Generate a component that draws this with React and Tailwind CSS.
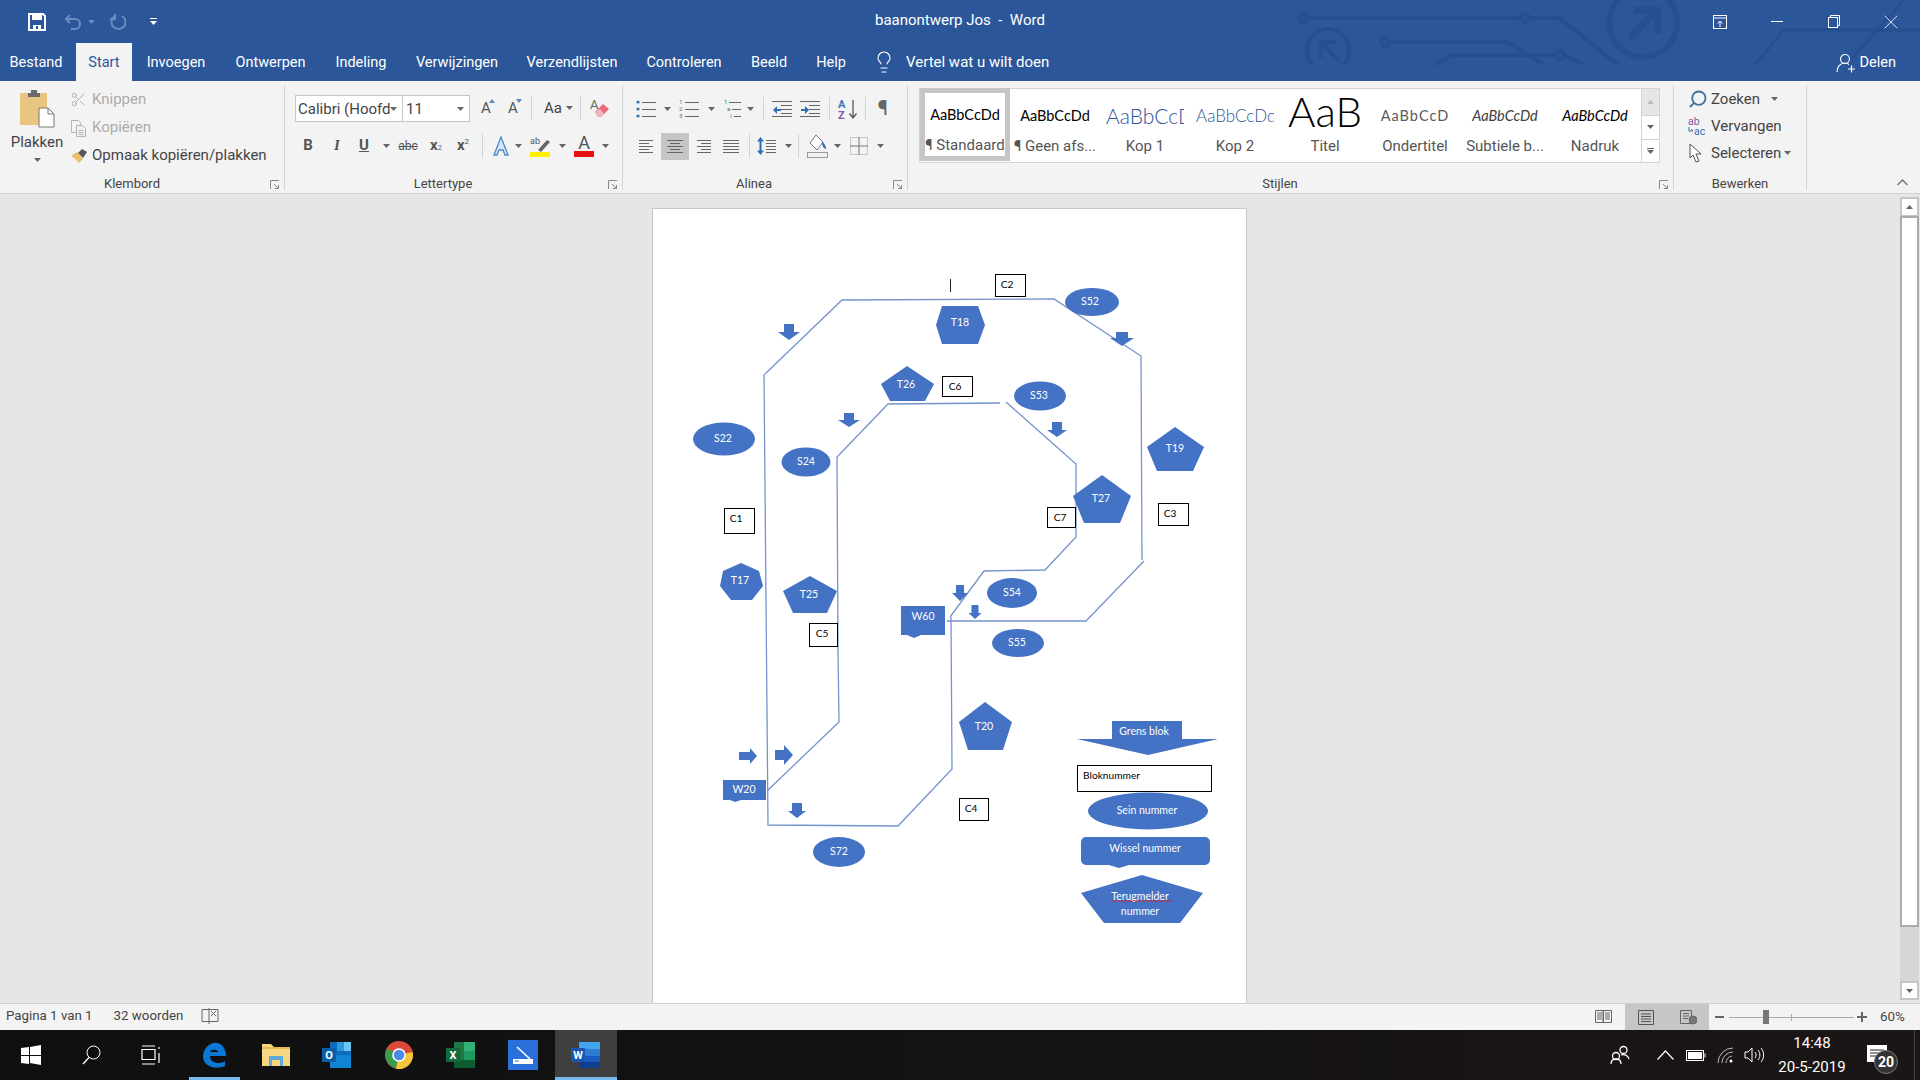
import React from 'react'
import { Scissors, Search, Lightbulb, X } from 'lucide-react'

const BLUE = '#4472c4'
const LINE = '#7593cc'

// ---------- small ribbon helpers ----------
function Caret({ color = '#666' }) {
  return <svg width="7" height="4" viewBox="0 0 7 4"><path d="M0 0h7L3.5 4z" fill={color} /></svg>
}

function Slot({ c = '', children }) {
  return <span className={`flex items-center justify-center shrink-0 h-full ${c}`}>{children}</span>
}

function Sep() {
  return <span className="block w-px h-[24px] bg-[#d4d4d4]" />
}

function Launcher() {
  return (
    <svg className="absolute right-[4px] bottom-0" width="10" height="10" viewBox="0 0 10 10" fill="none" stroke="#8a8a8a">
      <path d="M.5 9V.5H9" />
      <path d="M4 4l4.5 4.5M5 8.5h3.5V5" />
    </svg>
  )
}

function Group({ label, w, pr = '', launcher, children }) {
  return (
    <div className={`relative flex flex-col h-[105px] shrink-0 border-r border-[#d4d4d4] ${w}`}>
      <div className="h-[93px]">{children}</div>
      <div className={`h-[12px] leading-[12px] text-center text-[13px] text-[#444] ${pr}`}>{label}</div>
      {launcher && <Launcher />}
    </div>
  )
}

function Lines({ x = 0, y = 0, w = 14, n = 4, gap = 3, widths, color = '#666' }) {
  return (
    <>
      {Array.from({ length: n }).map((_, i) => (
        <rect key={i} x={x + (widths ? widths[i][0] : 0)} y={y + i * gap} width={widths ? widths[i][1] : w} height="1" fill={color} />
      ))}
    </>
  )
}

// ---------- ribbon icons ----------
const PasteIcon = () => (
  <svg width="36" height="40" viewBox="0 0 36 40">
    <rect x="1" y="4" width="27" height="32" rx="1" fill="#e8c581" />
    <path d="M9 4h3V1h6v3h3v4H9z" fill="#6b6b6b" />
    <path d="M20 19h9l6 6v13H20z" fill="#fff" stroke="#777" />
    <path d="M29 19v6h6" fill="none" stroke="#777" />
  </svg>
)

const CopyIcon = () => (
  <svg width="18" height="18" viewBox="0 0 18 18" fill="#f3f3f3" stroke="#b4b4b4">
    <path d="M1.5 1.5h7l2 2v10h-9z" />
    <path d="M6.5 6.5h6l3 3v8h-9z" />
    <path d="M8.5 11.5h5M8.5 13.5h5M8.5 15.5h5" />
  </svg>
)

const BrushIcon = () => (
  <svg width="18" height="16" viewBox="0 0 18 16">
    <path d="M1 8l6-4 6 7-4 4C7 12 4 10 1 8z" fill="#e9c16f" />
    <path d="M8 5l4-4 5 3-4 6z" fill="#555" />
  </svg>
)

const EraserIcon = () => (
  <svg width="20" height="22" viewBox="0 0 20 22">
    <text x="0" y="12" fontSize="13" fill="#666" fontFamily="Roboto, sans-serif">A</text>
    <path d="M5 15l8-8 6 5-8 8H8z" fill="#ec6a80" />
    <path d="M5 15l3 5h3l3-3-4-5z" fill="#f3b6c1" />
  </svg>
)

const BulletsIcon = () => (
  <svg width="20" height="20" viewBox="0 0 20 20">
    <circle cx="2" cy="3" r="1.6" fill="#41719c" /><circle cx="2" cy="10" r="1.6" fill="#41719c" /><circle cx="2" cy="17" r="1.6" fill="#41719c" />
    <Lines x={6} y={3} w={14} n={3} gap={7} />
  </svg>
)

const NumberIcon = () => (
  <svg width="20" height="20" viewBox="0 0 20 20" fontFamily="Roboto, sans-serif" fontSize="6" fill="#41719c">
    <text x="0" y="5">1</text><text x="0" y="12">2</text><text x="0" y="19">3</text>
    <Lines x={6} y={3} w={14} n={3} gap={7} />
  </svg>
)

const MultiIcon = () => (
  <svg width="18" height="20" viewBox="0 0 18 20" fontFamily="Roboto, sans-serif" fontSize="6" fill="#41719c">
    <text x="0" y="5">1</text><text x="3" y="12">a</text><text x="6" y="19">i</text>
    <rect x="5" y="3" width="12" height="1" fill="#666" /><rect x="8" y="10" width="9" height="1" fill="#666" /><rect x="10" y="17" width="7" height="1" fill="#666" />
  </svg>
)

const IndentIcon = ({ flip }) => (
  <svg width="20" height="18" viewBox="0 0 20 18">
    <Lines x={0} y={1} w={20} n={1} />
    <Lines x={9} y={5} w={11} n={3} gap={4} />
    <Lines x={0} y={16} w={20} n={1} />
    {flip
      ? <path d="M1 9h4V6l4 4-4 4v-3H1z" fill="#2b70b5" />
      : <path d="M9 9H5V6l-4 4 4 4v-3h4z" fill="#2b70b5" />}
  </svg>
)

const SortIcon = () => (
  <svg width="20" height="22" viewBox="0 0 20 22" fontFamily="Roboto, sans-serif" fontSize="11" fontWeight="700">
    <text x="0" y="10" fill="#3f78b5">A</text>
    <text x="0" y="21" fill="#7f5ba6">Z</text>
    <path d="M15 2v17M11.5 15.5L15 20l3.5-4.5" stroke="#555" fill="none" strokeWidth="1.3" />
  </svg>
)

const AlignIcon = ({ rows }) => (
  <svg width="16" height="15" viewBox="0 0 16 15">
    <Lines y={1} n={5} gap={3} widths={rows} />
  </svg>
)

const SpacingIcon = () => (
  <svg width="20" height="20" viewBox="0 0 20 20">
    <path d="M3.500 1l3.500 4.500H4.500v9H7L3.500 19 0 14.500h2.500v-9H0z" fill="#2b70b5" />
    <Lines x={9} y={4} w={10} n={5} gap={3} />
  </svg>
)

const FillIcon = () => (
  <svg width="22" height="24" viewBox="0 0 22 24">
    <path d="M3 9l6-8 7 7-6 8z" fill="#fff" stroke="#777" />
    <path d="M15 8c3 1 4 5 4 7-2 0-4-3-4-7z" fill="#2b70b5" />
    <rect x=".5" y="18.5" width="20" height="5" fill="#f3f3f3" stroke="#999" />
  </svg>
)

const BordersIcon = () => (
  <svg width="18" height="18" viewBox="0 0 18 18" fill="none" stroke="#9a9a9a" strokeDasharray="1 1">
    <rect x=".5" y=".5" width="17" height="17" />
    <path d="M9 0v18M0 9h18" stroke="#777" strokeDasharray="none" />
  </svg>
)

const GrowFont = ({ down }) => (
  <span className="relative text-[15px] text-[#555]">
    A
    <svg className="absolute -right-[4px] top-[2px]" width="6" height="4" viewBox="0 0 6 4">
      <path d={down ? 'M0 0h6L3 4z' : 'M0 4h6L3 0z'} fill="#5b87bd" />
    </svg>
  </span>
)

// ---------- taskbar logos ----------
const EdgeLogo = () => (
  <svg width="26" height="28" viewBox="0 0 26 28">
    <path d="M2 15C3 6 10 1 16 2c6 1 9 7 9 13H9c0 7 9 9 15 5v5c-9 4-22 1-22-10z" fill="#0a78d4" />
    <path d="M9 11c1-3 7-3 8 0z" fill="#0e0f10" />
  </svg>
)

const FolderLogo = () => (
  <svg width="28" height="24" viewBox="0 0 28 24">
    <path d="M0 1h9l3 3h16v19H0z" fill="#f6d67e" />
    <path d="M0 4h28v2H0z" fill="#e6b94f" />
    <path d="M7 13h14v10h-3v-6H10v6H7z" fill="#5fa8d8" />
  </svg>
)

const OutlookLogo = () => (
  <svg width="30" height="28" viewBox="0 0 30 28">
    <rect x="8" y="1" width="21" height="26" fill="#0f6cbd" />
    <rect x="15" y="1" width="7" height="9" fill="#2a9be0" />
    <rect x="22" y="1" width="7" height="9" fill="#6cc4f0" />
    <path d="M8 14l21 0v13H8z" fill="#1284d4" />
    <rect x="0" y="7" width="14" height="14" fill="#0a5ea8" />
    <text x="7" y="18" fontSize="11" fontWeight="700" textAnchor="middle" fill="#fff" fontFamily="Roboto, sans-serif">O</text>
  </svg>
)

const ChromeLogo = () => (
  <svg width="28" height="28" viewBox="0 0 28 28">
    <circle cx="14" cy="14" r="14" fill="#da4a3c" />
    <path d="M14 14L2 7.5A14 14 0 0 0 11 27.7z" fill="#3a9b4a" />
    <path d="M14 14l13.6-3A14 14 0 0 1 11 27.7z" fill="#f5c83b" />
    <circle cx="14" cy="14" r="6.8" fill="#fff" />
    <circle cx="14" cy="14" r="5.3" fill="#4a8be8" />
  </svg>
)

const ExcelLogo = () => (
  <svg width="30" height="28" viewBox="0 0 30 28">
    <rect x="8" y="1" width="21" height="26" fill="#1d7a45" />
    <rect x="18" y="1" width="11" height="9" fill="#33b077" />
    <rect x="18" y="10" width="11" height="9" fill="#1f9960" />
    <rect x="8" y="19" width="21" height="8" fill="#0e5c32" />
    <rect x="0" y="7" width="14" height="14" fill="#12693a" />
    <text x="7" y="18" fontSize="11" fontWeight="700" textAnchor="middle" fill="#fff" fontFamily="Roboto, sans-serif">X</text>
  </svg>
)

const ScanLogo = () => (
  <svg width="30" height="30" viewBox="0 0 30 30">
    <rect width="30" height="30" fill="#2a6fdb" />
    <path d="M9 7l13 12" stroke="#fff" strokeWidth="1.6" />
    <path d="M5 19h20v5H5z" fill="#fff" />
    <path d="M7 21h4" stroke="#2a6fdb" />
  </svg>
)

const WordLogo = () => (
  <svg width="30" height="28" viewBox="0 0 30 28">
    <rect x="8" y="1" width="21" height="7" fill="#41a5ee" />
    <rect x="8" y="8" width="21" height="7" fill="#2b7cd3" />
    <rect x="8" y="15" width="21" height="6" fill="#185abd" />
    <rect x="8" y="21" width="21" height="6" fill="#103f91" />
    <rect x="0" y="7" width="14" height="14" fill="#1a56b0" />
    <text x="7" y="18" fontSize="11" fontWeight="700" textAnchor="middle" fill="#fff" fontFamily="Roboto, sans-serif">W</text>
  </svg>
)

// ---------- diagram data, in screen coordinates ----------
const tracks = [
  '765,374 842,300 1054,299 1141,356 1142,560',
  '1144,561 1086,621 947,621',
  '764,374 768,825 898,826 952,769 951,617',
  '950,617 984,571 1045,570 1076,537 1076,464 1006,402',
  '1000,403 888,404 837,457 838,650 839,722 767,791',
]

const polys = [
  ['T18', '942,306 978,306 985,325 978,344 942,344 936,325', 960, 323],
  ['T26', '907,366 934,384 925,401 890,401 881,384', 906, 385],
  ['T19', '1175,427 1204,447 1193,471 1157,471 1147,447', 1175, 449],
  ['T27', '1102,475 1131,496 1120,523 1084,523 1073,496', 1101, 499],
  ['T17', '741,563 759,571 763,586 752,600 731,600 720,586 723,571', 740, 581],
  ['T25', '810,576 837,591 827,613 793,613 783,591', 809, 595],
  ['T20', '985,702 1012,722 1003,750 968,750 959,722', 984, 727],
  ['W60', '901,606 945,606 945,635 921,635 914,638 907,635 901,635', 923, 617],
  ['W20', '723,780 766,780 766,800 741,800 735,802 730,800 723,800', 744, 790],
  ['Grens blok', '1112,721 1182,721 1182,739 1218,739 1148,755 1077,739 1112,739', 1144, 732],
]

const ellipses = [
  ['S52', 1092, 302, 27, 14, 1090],
  ['S53', 1040, 396, 26, 14.5, 1039],
  ['S22', 724, 439, 31, 16.5, 723],
  ['S24', 806, 462, 24.5, 14.5, 806],
  ['S54', 1012, 593, 25, 15, 1012],
  ['S55', 1018, 643, 26, 14, 1017],
  ['S72', 839, 852, 26, 15, 839],
  ['Sein nummer', 1148, 811, 60, 18.5, 1147],
]

const boxes = [
  ['C2', 995, 274, 30, 22, 1007],
  ['C6', 942, 376, 30, 20, 955],
  ['C7', 1047, 507, 28, 20, 1060],
  ['C3', 1158, 503, 30, 22, 1170],
  ['C1', 724, 508, 30, 25, 736],
  ['C5', 809, 623, 28, 23, 822],
  ['C4', 959, 798, 29, 22, 971],
]

// cx, top, bottom, head half width, shaft half width, y where the head starts
const downArrows = [
  [789, 324, 340, 11, 5, 332],
  [1122, 332, 346, 12, 6, 338],
  [849, 413, 427, 11, 5, 420],
  [1057, 422, 437, 10, 5, 430],
  [960, 585, 601, 8, 4, 593],
  [975, 605, 619, 6.5, 3.5, 613],
  [797, 803, 818, 9, 5, 811],
]

// cy, left, right, head half height, shaft half height, x where the head starts
const rightArrows = [
  [756, 739, 757, 8, 4, 750],
  [755, 775, 793, 10, 5, 784],
]

const squiggle = Array.from({ length: 31 }).map((_, i) => `${1112 + i * 2},${i % 2 ? 900 : 902}`).join(' ')

function Diagram() {
  const label = "text-[10.5px] fill-white font-['Lato',sans-serif]"
  const dark = "text-[10.2px] fill-black font-['Lato',sans-serif]"
  return (
    <svg width="593" height="794" viewBox="653 209 593 794" className="block">
      {tracks.map(p => <polyline key={p} points={p} fill="none" stroke={LINE} strokeWidth="1.3" />)}
      {polys.map(([t, p, x, y]) => (
        <g key={t}>
          <polygon points={p} fill={BLUE} />
          <text x={x} y={y - 1} textAnchor="middle" dominantBaseline="central" className={label}>{t}</text>
        </g>
      ))}
      {ellipses.map(([t, cx, cy, rx, ry, tx]) => (
        <g key={t}>
          <ellipse cx={cx} cy={cy} rx={rx} ry={ry} fill={BLUE} />
          <text x={tx} y={cy - 1} textAnchor="middle" dominantBaseline="central" className={label}>{t}</text>
        </g>
      ))}
      {boxes.map(([t, x, y, w, h, tx]) => (
        <g key={t}>
          <rect x={x + .5} y={y + .5} width={w} height={h} fill="#fff" stroke="#000" />
          <text x={tx} y={y + 10} textAnchor="middle" dominantBaseline="central" className={dark}>{t}</text>
        </g>
      ))}
      {downArrows.map(([c, t, b, hw, sw, hy]) => (
        <polygon key={`${c}${t}`} fill={BLUE}
          points={`${c - sw},${t} ${c + sw},${t} ${c + sw},${hy} ${c + hw},${hy} ${c},${b} ${c - hw},${hy} ${c - sw},${hy}`} />
      ))}
      {rightArrows.map(([c, l, r, hh, sh, hx]) => (
        <polygon key={`${c}${l}`} fill={BLUE}
          points={`${l},${c - sh} ${hx},${c - sh} ${hx},${c - hh} ${r},${c} ${hx},${c + hh} ${hx},${c + sh} ${l},${c + sh}`} />
      ))}
      <rect x="1077.5" y="765.5" width="134" height="26" fill="#fff" stroke="#000" />
      <text x="1083" y="775" dominantBaseline="central" className={dark}>Bloknummer</text>
      <path d="M1086 837h119a5 5 0 0 1 5 5v18a5 5 0 0 1-5 5h-76l-10 3-10-3h-23a5 5 0 0 1-5-5v-18a5 5 0 0 1 5-5z" fill={BLUE} />
      <text x="1145" y="848" textAnchor="middle" dominantBaseline="central" className={label}>Wissel nummer</text>
      <polygon points="1142,875 1203,893 1180,923 1104,923 1081,893" fill={BLUE} />
      <text x="1140" y="896" textAnchor="middle" dominantBaseline="central" className={label}>Terugmelder</text>
      <text x="1140" y="911" textAnchor="middle" dominantBaseline="central" className={label}>nummer</text>
      <polyline points={squiggle} fill="none" stroke="#c0303c" strokeWidth="1" />
      <rect x="950" y="279" width="1" height="13" fill="#222" />
    </svg>
  )
}

// ---------- big areas ----------
function CircuitArt() {
  return (
    <svg className="absolute left-[1295px] top-0" width="625" height="65" viewBox="1295 0 625 65" fill="none" stroke="#25508f" strokeWidth="4">
      <circle cx="1303" cy="18" r="4" />
      <path d="M1307 18h214M1529 18h31l58 47" />
      <circle cx="1525" cy="18" r="4" />
      <circle cx="1385" cy="42" r="4" />
      <path d="M1389 42h119l36 23M1434 65l18-10h104M1564 55l21 10" />
      <circle cx="1560" cy="55" r="4" />
      <circle cx="1328" cy="50" r="21" />
      <path d="M1340 62l-17-18M1321 58V42h16" />
      <circle cx="1643" cy="23" r="34" strokeWidth="6" />
      <path d="M1630 38l27-29M1634 10h24v24" strokeWidth="7" />
      <path d="M1755 65l29-35h136M1846 65l58-65" strokeWidth="3" />
    </svg>
  )
}

function TitleBar() {
  return (
    <div className="relative bg-[#2b579a] text-white shrink-0">
      <CircuitArt />
      <div className="relative flex items-center h-[43px]">
        <Slot c="w-[62px] justify-end pr-[16px]">
          <svg width="18" height="18" viewBox="0 0 18 18">
            <path d="M1 1h14l2 2v14H1z" fill="none" stroke="#fff" strokeWidth="2" />
            <path d="M4 1h10v6H4z" fill="#fff" />
            <path d="M5 12h8v5H5z" fill="#fff" />
            <path d="M8 13h2v3H8z" fill="#2b579a" />
          </svg>
        </Slot>
        <Slot c="w-[22px]">
          <svg width="18" height="16" viewBox="0 0 18 16" fill="none" stroke="#6c8cbf" strokeWidth="2">
            <path d="M6 1L2 5l4 4M2 5h9a5 5 0 0 1 0 10H7" />
          </svg>
        </Slot>
        <Slot c="w-[14px]"><Caret color="#6c8cbf" /></Slot>
        <Slot c="w-[40px]">
          <svg width="16" height="18" viewBox="0 0 16 18" fill="none" stroke="#6c8cbf" strokeWidth="2">
            <path d="M11 3a7 7 0 1 1-7 0M4 1v5H-1" transform="translate(1 0)" />
          </svg>
        </Slot>
        <Slot c="w-[30px]">
          <svg width="7" height="8" viewBox="0 0 7 8" fill="#fff"><path d="M0 0h7v1H0zM0 3h7L3.500 7z" /></svg>
        </Slot>
        <div className="w-[707px] shrink-0" />
        <span className="text-[15px] whitespace-pre -mt-[2px]">baanontwerp Jos  -  Word</span>
        <div className="ml-auto flex items-center h-full">
          <Slot c="w-[30px]">
            <svg width="14" height="14" viewBox="0 0 14 14" fill="none" stroke="#fff">
              <rect x=".5" y=".5" width="13" height="13" />
              <path d="M0 3h14M7 12V6M4.5 8.5L7 6l2.5 2.5" />
            </svg>
          </Slot>
          <Slot c="w-[84px]"><span className="block w-[12px] h-px bg-white" /></Slot>
          <Slot c="w-[30px]">
            <svg width="12" height="13" viewBox="0 0 12 13" fill="none" stroke="#fff">
              <rect x=".5" y="2.5" width="9" height="10" />
              <path d="M2.5 2.5v-2h9v10h-2" />
            </svg>
          </Slot>
          <div className="w-[13px]" />
          <Slot c="w-[58px]"><X size={24} strokeWidth={0.8} /></Slot>
        </div>
      </div>
      <div className="relative flex items-stretch h-[38px] text-[14.5px]">
        <Slot c="w-[72px] pt-px">Bestand</Slot>
        <Slot c="w-[56px] ml-[4px] pt-px bg-[#f3f3f3] text-[#2b579a]">Start</Slot>
        <Slot c="w-[88px] pt-px">Invoegen</Slot>
        <Slot c="w-[101px] pt-px">Ontwerpen</Slot>
        <Slot c="w-[80px] pt-px">Indeling</Slot>
        <Slot c="w-[112px] pt-px">Verwijzingen</Slot>
        <Slot c="w-[118px] pt-px">Verzendlijsten</Slot>
        <Slot c="w-[106px] pt-px">Controleren</Slot>
        <Slot c="w-[64px] pt-px">Beeld</Slot>
        <Slot c="w-[60px] pt-px">Help</Slot>
        <Slot c="w-[45px]"><Lightbulb size={24} strokeWidth={1.1} /></Slot>
        <Slot c="pt-px text-[15px]">Vertel wat u wilt doen</Slot>
        <div className="ml-auto flex items-center pr-[24px] pt-[2px]">
          <svg width="20" height="20" viewBox="0 0 20 20" fill="none" stroke="#fff" strokeWidth="1.200" className="mr-[4px]">
            <circle cx="9" cy="6" r="4.500" />
            <path d="M1 19c0-5 3-9 8-9 2 0 3 .5 4 1.500M12 16h7M15.500 12.500v7" />
          </svg>
          Delen
        </div>
      </div>
    </div>
  )
}

function StyleItem({ preview, label, selected, pc = '' }) {
  return (
    <div className={`flex flex-col items-center w-[90px] shrink-0 h-full overflow-hidden ${selected ? 'border-[5px] border-[#c6c6c6] -mt-[1px] pt-[3px]' : 'pt-[8px]'}`}>
      <div className={`h-[38px] w-[78px] flex items-center justify-center overflow-hidden whitespace-nowrap font-['Lato',sans-serif] ${pc}`}>{preview}</div>
      <div className="text-[15px] text-[#555] leading-[22px] whitespace-nowrap">{label}</div>
    </div>
  )
}

function Ribbon() {
  return (
    <div className="flex h-[113px] shrink-0 items-center bg-[#f3f3f3] border-b border-[#d2d2d2] text-[#444] text-[15px]">
      <Group label="Klembord" w="w-[285px]" pr="pr-[20px]" launcher>
        <div className="flex h-full">
          <div className="flex flex-col items-center w-[70px] pl-[4px] pt-[4px]">
            <PasteIcon />
            <span className="mt-[3px] leading-[20px]">Plakken</span>
            <span className="mt-[6px] flex"><Caret /></span>
          </div>
          <div className="flex flex-col pt-[1px]">
            <div className="flex items-center h-[28px] text-[#acacac]"><Scissors size={17} className="mr-[5px]" strokeWidth={1.2} color="#a8a8a8" />Knippen</div>
            <div className="flex items-center h-[28px] text-[#acacac]"><span className="mr-[4px] flex"><CopyIcon /></span>Kopiëren</div>
            <div className="flex items-center h-[28px] whitespace-nowrap"><span className="mr-[4px] flex"><BrushIcon /></span>Opmaak kopiëren/plakken</div>
          </div>
        </div>
      </Group>

      <Group label="Lettertype" w="w-[338px]" pr="pr-[21px]" launcher>
        <div className="pl-[10px] pt-[10px]">
          <div className="flex items-center h-[27px]">
            <div className="flex items-center justify-between w-[108px] h-full bg-white border border-[#c6c6c6] pl-[2px] pr-[5px] pt-[2px]">
              <span className="w-[92px] overflow-hidden whitespace-nowrap">Calibri (Hoofdtekst)</span><Caret />
            </div>
            <div className="flex items-center justify-between w-[67px] h-full bg-white border border-l-0 border-[#c6c6c6] pl-[3px] pr-[5px] pt-[2px]">
              <span>11</span><Caret />
            </div>
            <Slot c="w-[32px]"><GrowFont /></Slot>
            <Slot c="w-[22px]"><GrowFont down /></Slot>
            <Slot c="w-[14px]"><Sep /></Slot>
            <Slot c="w-[41px] gap-[4px]"><span>Aa</span><Caret /></Slot>
            <Slot c="w-[2px]"><Sep /></Slot>
            <Slot c="w-[38px]"><EraserIcon /></Slot>
          </div>
          <div className="flex items-center h-[28px] mt-[10px] text-[#555]">
            <Slot c="w-[26px] font-bold text-[15px]">B</Slot>
            <Slot c="w-[32px] italic font-bold text-[15px] font-['Liberation_Serif',serif]">I</Slot>
            <Slot c="w-[22px] underline font-bold text-[15px]">U</Slot>
            <Slot c="w-[22px]"><Caret /></Slot>
            <Slot c="w-[22px] line-through text-[12px]">abc</Slot>
            <Slot c="w-[34px] font-bold text-[15px]">x<sub className="text-[8px] font-normal text-[#3f78b5]">2</sub></Slot>
            <Slot c="w-[20px] font-bold text-[15px]">x<sup className="text-[8px] font-normal">2</sup></Slot>
            <Slot c="w-[18px]"><Sep /></Slot>
            <Slot c="w-[20px]">
              <svg width="18" height="20" viewBox="0 0 18 20"><path d="M9 1l7 18h-3l-2-5H7l-2 5H2z" fill="#d6e6f6" stroke="#4b8ac9" strokeWidth="1.3" /></svg>
            </Slot>
            <Slot c="w-[14px]"><Caret /></Slot>
            <Slot c="w-[32px]">
              <svg width="22" height="22" viewBox="0 0 22 22">
                <text x="0" y="9" fontSize="9" fill="#555" fontFamily="Roboto, sans-serif">ab</text>
                <path d="M8 15L17 5l3 2-9 10z" fill="#666" />
                <rect x="0" y="17" width="20" height="5" fill="#ffef00" />
              </svg>
            </Slot>
            <Slot c="w-[10px]"><Caret /></Slot>
            <Slot c="w-[34px]">
              <span className="flex flex-col items-center leading-[16px] text-[18px]">A<span className="block w-[20px] h-[6px] bg-[#e81010]" /></span>
            </Slot>
            <Slot c="w-[8px]"><Caret /></Slot>
          </div>
        </div>
      </Group>

      <Group label="Alinea" w="w-[285px]" pr="pr-[22px]" launcher>
        <div className="pl-[13px] pt-[12px]">
          <div className="flex items-center h-[24px]">
            <Slot c="w-[20px]"><BulletsIcon /></Slot>
            <Slot c="w-[22px]"><Caret /></Slot>
            <Slot c="w-[22px]"><NumberIcon /></Slot>
            <Slot c="w-[22px]"><Caret /></Slot>
            <Slot c="w-[22px]"><MultiIcon /></Slot>
            <Slot c="w-[12px]"><Caret /></Slot>
            <Slot c="w-[14px]"><Sep /></Slot>
            <Slot c="w-[24px]"><IndentIcon /></Slot>
            <Slot c="w-[32px]"><IndentIcon flip /></Slot>
            <Slot c="w-[6px]"><Sep /></Slot>
            <Slot c="w-[32px]"><SortIcon /></Slot>
            <Slot c="w-[2px]"><Sep /></Slot>
            <Slot c="w-[34px] text-[21px] text-[#666]">¶</Slot>
          </div>
          <div className="flex items-center h-[27px] mt-[12px]">
            <Slot c="w-[22px]"><AlignIcon rows={[[0, 14], [0, 10], [0, 14], [0, 10], [0, 14]]} /></Slot>
            <Slot c="w-[3px]" />
            <Slot c="w-[28px] bg-[#c6c6c6]"><AlignIcon rows={[[0, 16], [3, 10], [0, 16], [3, 10], [0, 16]]} /></Slot>
            <Slot c="w-[3px]" />
            <Slot c="w-[22px]"><AlignIcon rows={[[2, 14], [6, 10], [2, 14], [6, 10], [2, 14]]} /></Slot>
            <Slot c="w-[34px]"><AlignIcon rows={[[0, 16], [0, 16], [0, 16], [0, 16], [0, 16]]} /></Slot>
            <Slot c="w-[2px]"><Sep /></Slot>
            <Slot c="w-[34px]"><SpacingIcon /></Slot>
            <Slot c="w-[8px]"><Caret /></Slot>
            <Slot c="w-[12px]"><Sep /></Slot>
            <Slot c="w-[28px]"><FillIcon /></Slot>
            <Slot c="w-[10px]"><Caret /></Slot>
            <Slot c="w-[34px]"><BordersIcon /></Slot>
            <Slot c="w-[8px]"><Caret /></Slot>
          </div>
        </div>
      </Group>

      <Group label="Stijlen" w="w-[766px]" pr="pr-[21px]" launcher>
        <div className="pl-[11px] pt-[3px]">
          <div className="flex w-[741px] h-[75px] bg-white border border-[#d4d4d4]">
            <StyleItem preview="AaBbCcDd" label="¶ Standaard" selected pc="text-[14.5px] text-black" />
            <StyleItem preview="AaBbCcDd" label="¶ Geen afs..." pc="text-[14.5px] text-black" />
            <StyleItem preview="AaBbCcDd" label="Kop 1" pc="text-[21px] font-light text-[#2f5496] justify-start" />
            <StyleItem preview="AaBbCcDd" label="Kop 2" pc="text-[17px] font-light text-[#2f5496] justify-start" />
            <StyleItem preview="AaB" label="Titel" pc="text-[42px] font-light text-black items-start leading-[28px]" />
            <StyleItem preview="AaBbCcD" label="Ondertitel" pc="text-[14.5px] tracking-[1px] text-[#5a5a5a]" />
            <StyleItem preview="AaBbCcDd" label="Subtiele b..." pc="text-[14.5px] italic text-[#404040]" />
            <StyleItem preview="AaBbCcDd" label="Nadruk" pc="text-[14.5px] italic text-black" />
            <div className="flex flex-col w-[18px] shrink-0 ml-auto border-l border-[#d4d4d4]">
              <div className="flex items-center justify-center h-[26px] bg-[#e6e6e6]"><span className="rotate-180 flex"><Caret color="#bbb" /></span></div>
              <div className="flex items-center justify-center h-[25px] border-y border-[#d4d4d4]"><Caret /></div>
              <div className="flex flex-col items-center justify-center flex-1 gap-[1px]"><span className="block w-[7px] h-px bg-[#666]" /><Caret /></div>
            </div>
          </div>
        </div>
      </Group>

      <Group label="Bewerken" w="w-[133px]">
        <div className="flex flex-col pl-[14px] pt-[1px]">
          <div className="flex items-center h-[27px]">
            <Search size={20} strokeWidth={2.2} color="#41719c" className="-scale-x-100 mr-[3px]" />Zoeken
            <span className="ml-[11px] flex"><Caret /></span>
          </div>
          <div className="flex items-center h-[27px]">
            <svg width="20" height="20" viewBox="0 0 20 20" className="mr-[3px]" fontFamily="Roboto, sans-serif" fontSize="10.5">
              <text x="0" y="9" fill="#7f5ba6">ab</text>
              <text x="6" y="19" fill="#2b70b5">ac</text>
              <path d="M1 11v4h4M3 13l2 2" stroke="#2b70b5" fill="none" />
            </svg>
            Vervangen
          </div>
          <div className="flex items-center h-[27px]">
            <svg width="16" height="20" viewBox="0 0 16 20" className="mr-[7px]" fill="#fff" stroke="#555"><path d="M2 1v14l3-3 3 7 3-1-3-7h5z" /></svg>
            Selecteren
            <span className="ml-[3px] flex"><Caret /></span>
          </div>
        </div>
      </Group>

      <div className="flex-1 flex justify-end items-end self-stretch pr-[12px] pb-[7px]">
        <svg width="11" height="7" viewBox="0 0 11 7" fill="none" stroke="#777" strokeWidth="1.5"><path d="M.5 6l5-5 5 5" /></svg>
      </div>
    </div>
  )
}

function DocArea() {
  return (
    <div className="flex flex-1 min-h-0 bg-[#e6e6e6] overflow-hidden">
      <div className="w-[1900px] shrink-0 pl-[653px] pt-[15px]">
        <div className="w-[593px] h-[794px] bg-white shadow-[0_0_0_1px_#c8c8c8]">
          <Diagram />
        </div>
      </div>
      <div className="flex flex-col w-[19px] shrink-0 pt-[3px] h-[806px]">
        <div className="flex items-center justify-center h-[20px] bg-white border-2 border-[#c6c6c6]"><span className="rotate-180 flex"><Caret color="#666" /></span></div>
        <div className="h-[711px] -mt-[1px] bg-white border-2 border-[#ababab]" />
        <div className="flex-1 bg-[#d6d6d6]" />
        <div className="flex items-center justify-center h-[19px] bg-white border-2 border-[#c6c6c6]"><Caret color="#666" /></div>
      </div>
    </div>
  )
}

function StatusBar() {
  return (
    <div className="flex items-center h-[27px] shrink-0 bg-[#f3f3f3] border-t border-[#cfcfcf] text-[13.3px] text-[#444]">
      <span className="ml-[6px] pb-[2px]">Pagina 1 van 1</span>
      <span className="ml-[21px] pb-[2px]">32 woorden</span>
      <svg width="18" height="16" viewBox="0 0 18 16" fill="none" stroke="#666" className="ml-[18px] mb-[2px]">
        <path d="M8 1.5H1v12h7M8 0v16M8 1.5h9v12H8" />
        <path d="M10 3l5 5M15 3l-5 5" />
      </svg>
      <div className="ml-auto flex items-center h-full">
        <Slot c="w-[44px]">
          <svg width="17" height="14" viewBox="0 0 17 14" fill="none" stroke="#666"><path d="M.5.5h7.5v12H.5zM8.5.5H16.5v12H8.5zM2 3h5M2 5h5M2 7h5M2 9h5M10 3h5M10 5h5M10 7h5M10 9h5" /></svg>
        </Slot>
        <div className="flex items-center h-full bg-[#c6c6c6]">
          <Slot c="w-[42px]">
            <svg width="16" height="15" viewBox="0 0 16 15" fill="none" stroke="#555"><path d="M.5.5h15v14H.5zM3 4h10M3 6.500h10M3 9h10M3 11.500h10" /></svg>
          </Slot>
          <Slot c="w-[42px]">
            <svg width="17" height="15" viewBox="0 0 17 15" fill="none" stroke="#666">
              <path d="M.5.500h11v13H.5zM3 3.500h6M3 6h6M3 8.500h5" />
              <circle cx="13" cy="10" r="4" fill="#777" />
            </svg>
          </Slot>
        </div>
        <Slot c="w-[20px]"><span className="block w-[9px] h-[2px] bg-[#666]" /></Slot>
        <div className="relative w-[125px] h-px bg-[#aaa]">
          <span className="absolute left-[34px] -top-[7px] w-[6px] h-[14px] bg-[#777]" />
          <span className="absolute left-[62px] -top-[3px] w-px h-[7px] bg-[#aaa]" />
        </div>
        <Slot c="w-[17px] ml-[-1px]"><span className="relative block w-[10px] h-[2px] bg-[#666] after:absolute after:left-[4px] after:-top-[4px] after:w-[2px] after:h-[10px] after:bg-[#666]" /></Slot>
        <span className="ml-[10px] mr-[16px] w-[24px] whitespace-nowrap">60%</span>
      </div>
    </div>
  )
}

function Taskbar() {
  return (
    <div className="flex items-center h-[50px] shrink-0 bg-linear-to-r from-[#0e0f10] to-[#1b1616] text-white">
      <Slot c="w-[61px]">
        <svg width="20" height="20" viewBox="0 0 20 20" fill="#fff"><path d="M0 3l8-1v8H0zM9 2l11-2v10H9zM0 11h8v8l-8-1zM9 11h11v9L9 18z" /></svg>
      </Slot>
      <Slot c="w-[60px]">
        <svg width="19" height="20" viewBox="0 0 19 20" fill="none" stroke="#fff"><circle cx="11.500" cy="7.500" r="6.500" /><path d="M7 12.500L1 19" strokeWidth="1.300" /></svg>
      </Slot>
      <Slot c="w-[60px]">
        <svg width="20" height="20" viewBox="0 0 20 20" fill="none" stroke="#fff"><path d="M1 1h13M1 19h13M1 4.500h13v10H1zM18 2v2M18 8v10" strokeWidth="1.200" /></svg>
      </Slot>
      <div className="relative flex items-center justify-center w-[62px] h-full ml-[2px]">
        <EdgeLogo />
        <span className="absolute bottom-0 left-[6px] right-[5px] h-[3px] bg-[#76b9ed]" />
      </div>
      <Slot c="w-[61px]"><FolderLogo /></Slot>
      <Slot c="w-[62px]"><OutlookLogo /></Slot>
      <Slot c="w-[62px]"><ChromeLogo /></Slot>
      <Slot c="w-[62px]"><ExcelLogo /></Slot>
      <Slot c="w-[62px]"><ScanLogo /></Slot>
      <div className="relative flex items-center justify-center w-[62px] ml-[1px] h-full bg-[#3f3f3f]">
        <WordLogo />
        <span className="absolute bottom-0 inset-x-0 h-[3px] bg-[#76b9ed]" />
      </div>
      <div className="ml-auto flex items-center h-full">
        <Slot c="w-[30px] mr-[14px]">
          <svg width="20" height="20" viewBox="0 0 20 20" fill="none" stroke="#fff" strokeWidth="1.300">
            <circle cx="13.500" cy="5" r="3.500" /><circle cx="6" cy="11" r="3.500" />
            <path d="M1 19c0-3 2-5 5-5s5 2 5 5M11 10c3-1 7 0 8 4" />
          </svg>
        </Slot>
        <Slot c="w-[32px]">
          <svg width="17" height="10" viewBox="0 0 17 10" fill="none" stroke="#fff" strokeWidth="1.200"><path d="M.5 9.500L8.500 1l8 8.500" /></svg>
        </Slot>
        <Slot c="w-[30px]">
          <svg width="20" height="11" viewBox="0 0 20 11" fill="none" stroke="#fff"><rect x=".5" y=".5" width="17" height="10" /><rect x="2" y="2" width="14" height="7" fill="#fff" stroke="none" /><path d="M19 3.500v4" /></svg>
        </Slot>
        <Slot c="w-[30px]">
          <svg width="18" height="18" viewBox="0 0 18 18" fill="none" stroke="#bbb">
            <path d="M1 17A15 15 0 0 1 16 2M5 17a11 11 0 0 1 11-11M9 17a7 7 0 0 1 6-7" />
            <circle cx="14" cy="15" r="1.500" fill="#fff" stroke="none" />
          </svg>
        </Slot>
        <Slot c="w-[26px]">
          <svg width="20" height="18" viewBox="0 0 20 18" fill="none" stroke="#fff"><path d="M1 6h3l4-4v14l-4-4H1zM11 6c1.500 2 1.500 4 0 6M14 4c2.500 3 2.500 7 0 10M17 2c3.500 4 3.500 10 0 14" /></svg>
        </Slot>
        <div className="flex flex-col items-center w-[84px] ml-[3px] text-[15px] leading-[24px] whitespace-nowrap"><span>14:48</span><span>20-5-2019</span></div>
        <div className="relative flex items-center justify-center w-[46px] h-full">
          <svg width="20" height="17" viewBox="0 0 20 17" className="-mt-[4px]"><path d="M0 0h20v17H0z" fill="#fff" /><path d="M3 5h14M3 8h14M3 11h10" stroke="#222" /></svg>
          <span className="absolute right-[2px] bottom-[6px] flex items-center justify-center w-[24px] h-[24px] rounded-full bg-[#333] border border-[#777] text-[14px] font-bold">20</span>
        </div>
        <span className="w-px h-full ml-[14px] mr-[5px] bg-[#444]" />
      </div>
    </div>
  )
}

export default function App() {
  return (
    <div className="flex flex-col w-[1920px] h-[1080px] overflow-hidden font-['Roboto',sans-serif]">
      <TitleBar />
      <Ribbon />
      <DocArea />
      <StatusBar />
      <Taskbar />
    </div>
  )
}
